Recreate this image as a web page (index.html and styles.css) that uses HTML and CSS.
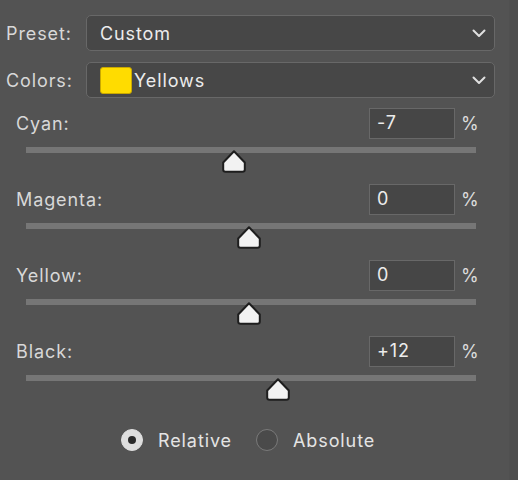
FILE: index.html
```html
<!DOCTYPE html>
<html>
<head>
<meta charset="utf-8">
<link rel="stylesheet" href="styles.css">
</head>
<body>
<div class="app">
  <div class="panel">
    <div class="row-select">
      <span class="sel-label">Preset:</span>
      <div class="select">
        <span class="sel-text">Custom</span>
        <svg class="chev" width="14" height="9" viewBox="0 0 14 9"><path d="M1.5 1.5 L7 7 L12.5 1.5" fill="none" stroke="#e0e0e0" stroke-width="2" stroke-linecap="round" stroke-linejoin="round"/></svg>
      </div>
    </div>
    <div class="row-select second">
      <span class="sel-label">Colors:</span>
      <div class="select">
        <span class="swatch"></span>
        <span class="sel-text tight">Yellows</span>
        <svg class="chev" width="14" height="9" viewBox="0 0 14 9"><path d="M1.5 1.5 L7 7 L12.5 1.5" fill="none" stroke="#e0e0e0" stroke-width="2" stroke-linecap="round" stroke-linejoin="round"/></svg>
      </div>
    </div>

    <div class="group">
      <div class="group-head">
        <span class="g-label">Cyan:</span>
        <span class="num">-7</span>
        <span class="pct">%</span>
      </div>
      <div class="track">
        <svg class="thumb" style="left: 196px" width="24" height="23" viewBox="0 0 24 23"><path d="M12 1.2 L22.8 12.5 L22.8 19.5 Q22.8 21.8 20.5 21.8 L3.5 21.8 Q1.2 21.8 1.2 19.5 L1.2 12.5 Z" fill="#f2f2f2" stroke="#1e1e1e" stroke-width="2" stroke-linejoin="round"/></svg>
      </div>
    </div>

    <div class="group">
      <div class="group-head">
        <span class="g-label">Magenta:</span>
        <span class="num">0</span>
        <span class="pct">%</span>
      </div>
      <div class="track">
        <svg class="thumb" style="left: 211px" width="24" height="23" viewBox="0 0 24 23"><path d="M12 1.2 L22.8 12.5 L22.8 19.5 Q22.8 21.8 20.5 21.8 L3.5 21.8 Q1.2 21.8 1.2 19.5 L1.2 12.5 Z" fill="#f2f2f2" stroke="#1e1e1e" stroke-width="2" stroke-linejoin="round"/></svg>
      </div>
    </div>

    <div class="group">
      <div class="group-head">
        <span class="g-label">Yellow:</span>
        <span class="num">0</span>
        <span class="pct">%</span>
      </div>
      <div class="track">
        <svg class="thumb" style="left: 211px" width="24" height="23" viewBox="0 0 24 23"><path d="M12 1.2 L22.8 12.5 L22.8 19.5 Q22.8 21.8 20.5 21.8 L3.5 21.8 Q1.2 21.8 1.2 19.5 L1.2 12.5 Z" fill="#f2f2f2" stroke="#1e1e1e" stroke-width="2" stroke-linejoin="round"/></svg>
      </div>
    </div>

    <div class="group">
      <div class="group-head">
        <span class="g-label">Black:</span>
        <span class="num">+12</span>
        <span class="pct">%</span>
      </div>
      <div class="track">
        <svg class="thumb" style="left: 240px" width="24" height="23" viewBox="0 0 24 23"><path d="M12 1.2 L22.8 12.5 L22.8 19.5 Q22.8 21.8 20.5 21.8 L3.5 21.8 Q1.2 21.8 1.2 19.5 L1.2 12.5 Z" fill="#f2f2f2" stroke="#1e1e1e" stroke-width="2" stroke-linejoin="round"/></svg>
      </div>
    </div>

    <div class="radios">
      <label class="radio"><span class="dot on"></span><span class="r-text">Relative</span></label>
      <label class="radio"><span class="dot"></span><span class="r-text">Absolute</span></label>
    </div>
  </div>
  <div class="strip"></div>
</div>
</body>
</html>
```
FILE: styles.css
```css
* { box-sizing: border-box; }
html, body { margin: 0; padding: 0; }
body {
  background: #535353;
  font-family: Inter, "Liberation Sans", sans-serif;
  color: #dcdcdc;
  width: 518px;
  height: 480px;
  overflow: hidden;
  letter-spacing: 0.9px;
}
.app {
  display: flex;
  width: 518px;
  height: 480px;
}
.panel {
  width: 509px;
  padding-top: 15px;
}
.strip {
  width: 9px;
  background: #4d4d4d;
  border-left: 1px solid #505050;
}
.row-select {
  display: flex;
  align-items: center;
  height: 36px;
}
.row-select.second { margin-top: 11px; }
.sel-label {
  width: 86px;
  padding-left: 6px;
  font-size: 18px;
  color: #d8d8d8;
}
.select {
  width: 409px;
  height: 36px;
  background: #474747;
  border: 1.5px solid #686868;
  border-radius: 5px;
  display: flex;
  align-items: center;
  padding-left: 13px;
  padding-right: 8px;
}
.sel-text {
  flex: 1;
  font-size: 18px;
  color: #ececec;
}
.sel-text.tight { margin-left: 2px; }
.swatch {
  width: 32px;
  height: 27px;
  background: #ffdc00;
  border: 1px solid #c9a800;
  border-radius: 3px;
}

.group {
  margin-top: 10px;
  height: 76px;
}
.group + .group { margin-top: 0; }
.group-head {
  display: flex;
  align-items: center;
  height: 31px;
}
.g-label {
  flex: 1;
  padding-left: 16px;
  font-size: 18px;
  color: #d8d8d8;
}
.num {
  width: 86px;
  height: 31px;
  background: #464646;
  border: 1.5px solid #686868;
  padding-left: 7px;
  font-size: 18px;
  line-height: 28px;
  color: #ececec;
}
.pct {
  width: 54px;
  padding-left: 6px;
  font-size: 18px;
  color: #dcdcdc;
}
.track {
  position: relative;
  margin-top: 8px;
  margin-left: 26px;
  width: 450px;
  height: 6px;
  background: #767676;
}
.thumb {
  position: absolute;
  top: 3px;
}
.radios {
  margin-top: 17px;
  height: 22px;
  display: flex;
  align-items: center;
  padding-left: 121px;
  gap: 24px;
}
.radio {
  display: flex;
  align-items: center;
  gap: 15px;
  font-size: 18px;
  color: #e4e4e4;
}
.dot {
  width: 22px;
  height: 22px;
  border-radius: 50%;
  border: 1.5px solid #7a7a7a;
  background: #4a4a4a;
  position: relative;
}
.dot.on {
  background: #dedede;
  border-color: #dedede;
}
.dot.on::after {
  content: "";
  position: absolute;
  left: 50%;
  top: 50%;
  width: 8px;
  height: 8px;
  margin: -4px 0 0 -4px;
  border-radius: 50%;
  background: #2a2a2a;
}
```
